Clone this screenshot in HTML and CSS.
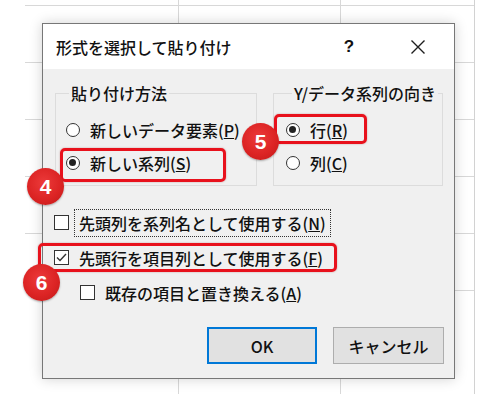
FILE: index.html
```html
<!DOCTYPE html>
<html lang="ja">

<head>
    <meta charset="UTF-8">
    <meta name="viewport" content="width=device-width, initial-scale=1.0">
    <title>形式を選択して貼り付け</title>
    <link rel="stylesheet" href="styles.css">
</head>

<body>
    <div class="sheet">
        <div class="dialog">
            <div class="titlebar">
                <span class="title">形式を選択して貼り付け</span>
                <span class="help">?</span>
                <svg class="close" width="16" height="16" viewBox="0 0 16 16">
                    <path d="M1.5 1.5L14.5 14.5M14.5 1.5L1.5 14.5" stroke="#1e1e1e" stroke-width="1.4" fill="none" />
                </svg>
            </div>

            <div class="content">
                <div class="groups">
                    <fieldset class="group group-method">
                        <legend>貼り付け方法</legend>
                        <div class="radio-row"><span class="radio"></span><span>新しいデータ要素(<u>P</u>)</span></div>
                        <div class="radio-row"><span class="radio checked"></span><span>新しい系列(<u>S</u>)</span></div>
                    </fieldset>
                    <fieldset class="group group-axis">
                        <legend>Y/データ系列の向き</legend>
                        <div class="radio-row"><span class="radio checked"></span><span>行(<u>R</u>)</span></div>
                        <div class="radio-row"><span class="radio"></span><span>列(<u>C</u>)</span></div>
                    </fieldset>
                </div>

                <div class="checks">
                    <div class="check-row">
                        <span class="box"></span>
                        <span class="label focused">先頭列を系列名として使用する(<u>N</u>)</span>
                    </div>
                    <div class="check-row">
                        <span class="box">
                            <svg width="13" height="13" viewBox="0 0 13 13">
                                <path d="M2 6.5L5 9.5L11 3" stroke="#333" stroke-width="1.4" fill="none" />
                            </svg>
                        </span>
                        <span class="label">先頭行を項目列として使用する(<u>F</u>)</span>
                    </div>
                    <div class="check-row sub">
                        <span class="box"></span>
                        <span class="label">既存の項目と置き換える(<u>A</u>)</span>
                    </div>
                </div>

                <div class="buttons">
                    <button class="btn btn-default">OK</button>
                    <button class="btn">キャンセル</button>
                </div>
            </div>

            <!-- 注釈 -->
            <div class="mark mark-series"></div>
            <div class="mark mark-row"></div>
            <div class="mark mark-header"></div>
            <span class="badge badge-4">4</span>
            <span class="badge badge-5">5</span>
            <span class="badge badge-6">6</span>
        </div>
    </div>
</body>

</html>
```

FILE: styles.css
```css
* {
    margin: 0;
    padding: 0;
    box-sizing: border-box;
}

body {
    background-color: #fff;
    font-family: "Noto Sans CJK JP", "Noto Sans", sans-serif;
    font-size: 16px;
    font-weight: 500;
    line-height: 20px;
    color: #111;
    overflow: hidden;
}

/* 背景のシート（グリッド線） */
.sheet {
    width: 450px;
    height: 394px;
    margin-left: 25px;
    padding: 23px 0 0 17px;
    border-right: 1px solid #d2d2d2;
    background:
        repeating-linear-gradient(to bottom, transparent 0 56px, #d8d8d8 56px 57px) 0 -51px,
        repeating-linear-gradient(to right, transparent 0 161px, #d8d8d8 161px 162px) -8px 0,
        #fff;
}

.dialog {
    position: relative;
    width: 413px;
    height: 356px;
    border: 1px solid #777;
    background-color: #f0f0f0;
    box-shadow: 0 0 12px rgba(0, 0, 0, 0.18);
}

.titlebar {
    display: flex;
    align-items: center;
    height: 45px;
    padding-left: 13px;
    background-color: #fff;
}

.title {
    width: 285px;
}

.help {
    width: 16px;
    text-align: center;
    font-family: "Liberation Sans", sans-serif;
    font-weight: bold;
    font-size: 17px;
}

.close {
    margin-left: 53px;
}

.content {
    padding: 14px 10px 0 11px;
}

.groups {
    display: flex;
    gap: 16px;
    padding-left: 1px;
}

.group {
    height: 103px;
    border: 1px solid #dcdcdc;
    padding: 10px 0 0 10px;
}

.group legend {
    margin-left: 3px;
    padding: 0 2px;
}

.group-method {
    width: 202px;
}

.group-axis {
    width: 170px;
    padding-left: 12px;
}

.group-axis legend {
    margin-left: 6px;
}

.radio-row {
    display: flex;
    align-items: center;
    gap: 10px;
    height: 33px;
}

.radio {
    position: relative;
    width: 14px;
    height: 14px;
    border: 1.5px solid #333;
    border-radius: 50%;
    background-color: #fff;
}

.radio.checked::after {
    content: "";
    position: absolute;
    left: 2px;
    top: 2px;
    width: 7px;
    height: 7px;
    border-radius: 50%;
    background-color: #222;
}

.checks {
    margin-top: 19px;
}

.check-row {
    display: flex;
    align-items: center;
    gap: 5px;
    height: 35px;
}

.check-row.sub {
    padding-left: 26px;
}

.box {
    display: flex;
    align-items: center;
    justify-content: center;
    width: 15px;
    height: 15px;
    border: 1.5px solid #333;
    background-color: #fff;
}

.label {
    padding: 3px 4px;
    border: 1px solid transparent;
}

.label.focused {
    border: 1px dotted #333;
}

.buttons {
    display: flex;
    justify-content: flex-end;
    gap: 16px;
    margin-top: 17px;
}

.btn {
    width: 111px;
    height: 37px;
    font-family: inherit;
    font-size: 16px;
    font-weight: 500;
    color: #111;
    background-color: #e1e1e1;
    border: 1px solid #adadad;
}

.btn-default {
    width: 110px;
    border: 2px solid #0078d7;
}

/* 赤い枠 */
.mark {
    position: absolute;
    border: 3px solid #e8111c;
    border-radius: 5px;
    box-shadow: 0 0 2px rgba(120, 0, 0, 0.35);
}

.mark-series {
    left: 17px;
    top: 124px;
    width: 166px;
    height: 34px;
}

.mark-row {
    left: 231px;
    top: 90px;
    width: 93px;
    height: 30px;
}

.mark-header {
    left: -5px;
    top: 219px;
    width: 299px;
    height: 29px;
}

/* 番号のバッジ */
.badge {
    position: absolute;
    display: flex;
    align-items: center;
    justify-content: center;
    width: 37px;
    height: 37px;
    border-radius: 50%;
    background: radial-gradient(circle at 45% 40%, #ec3a3a 0%, #dc2424 55%, #c01818 100%);
    box-shadow: 0 1px 2px rgba(0, 0, 0, 0.3);
    color: #fff;
    font-family: "Liberation Sans", sans-serif;
    font-weight: bold;
    font-size: 21px;
}

.badge-4 {
    left: -16px;
    top: 144px;
}

.badge-5 {
    left: 199px;
    top: 99px;
}

.badge-6 {
    left: -20px;
    top: 240px;
}
```
